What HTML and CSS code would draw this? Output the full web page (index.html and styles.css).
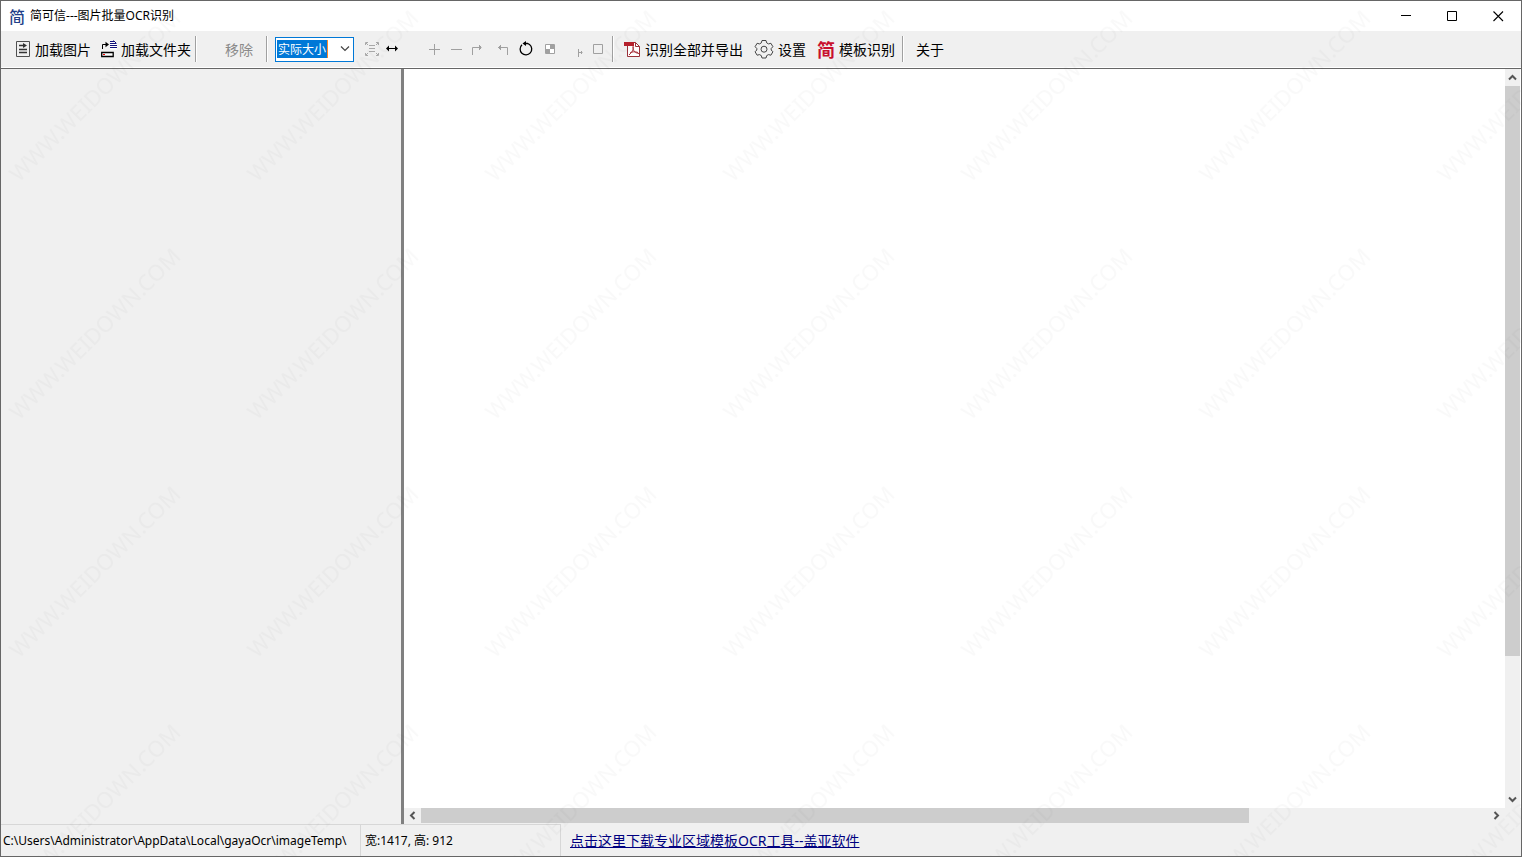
FILE: index.html
```html
<!DOCTYPE html>
<html lang="zh-CN">
<head>
<meta charset="utf-8">
<title>简可信---图片批量OCR识别</title>
<link rel="stylesheet" href="styles.css">
</head>
<body>
<div class="window">
  <header class="titlebar">
    <span class="logo logo-blue" aria-hidden="true">简</span>
    <h1 class="title">简可信---图片批量OCR识别</h1>
    <div class="caption-buttons">
      <button class="caption" aria-label="最小化"><svg width="11" height="11"><path d="M0 4.500h10" stroke="#000"/></svg></button>
      <button class="caption" aria-label="最大化"><svg width="11" height="11"><path d="M.5.5h9v9h-9z" fill="none" stroke="#000"/></svg></button>
      <button class="caption" aria-label="关闭"><svg width="11" height="11"><path d="M.5.5l9.500 9.500M10 .5L.5 10" stroke="#000" stroke-width="1.100"/></svg></button>
    </div>
  </header>

  <nav class="toolbar" aria-label="工具栏">
    <div class="group group-load">
      <button class="tool"><svg width="16" height="16" fill="none" stroke="#505050"><path d="M1.500.5h13v15h-13z"/><path d="M4 4.500h5M4 8.500h8M4 11.500h8" stroke="#333" stroke-width="1.300"/><path d="M8 2l4 2.500-4 2.500z" fill="#333" stroke="none"/></svg><span class="label">加载图片</span></button>
      <button class="tool"><svg width="16" height="18" fill="none" stroke="#000"><path d="M1.500 9V4.500h4"/><path d="M4.500 1.800L8 4.500 4.500 7.200z" fill="#000" stroke="none"/><path d="M.7 12.500h11.500v4H.7z" fill="#fff" stroke-width="1.300"/><path d="M2 14.500h2" stroke="#e00"/><path d="M9 .5h4l3 3v6H9z" fill="#fff" stroke="none"/><path d="M9 1.500h4M9 3.500h6M9 5.500h7M9 7.500h7M12.500.5l3 3" stroke="#10107a"/></svg><span class="label">加载文件夹</span></button>
    </div>
    <div class="group group-remove">
      <button class="tool" disabled><span class="label">移除</span></button>
    </div>
    <div class="group group-view">
      <div class="combo">
        <select class="combo-value" aria-label="缩放"><option>实际大小</option><option>适合宽度</option></select>
        <svg class="combo-arrow" width="10" height="6" aria-hidden="true"><path d="M1 .5l4 4 4-4" fill="none" stroke="#444" stroke-width="1.200"/></svg>
      </div>
      <div class="fit">
        <button class="icon-sm" aria-label="适合窗口" disabled><svg width="16" height="16" fill="none" stroke="#a8a8a8"><path d="M1.500 4V1.500H4M12 1.500h2.500V4M1.500 12v2.500H4M12 14.500h2.500V12M2 2l2 2M14 2l-2 2M2 14l2-2M14 14l-2-2M5 4.500h6M5 7.500h6M5 10.500h6"/></svg></button>
        <button class="icon-sm" aria-label="适合宽度"><svg width="14" height="8"><path d="M2 3.500h10" stroke="#000"/><path d="M1 3.500l3-3v6zM13 3.500l-3-3v6z"/></svg></button>
      </div>
      <div class="edit">
        <button class="icon" aria-label="放大" disabled><svg width="24" height="24"><path d="M11 12.500h11M16.500 7v11"/></svg></button>
        <button class="icon" aria-label="缩小" disabled><svg width="24" height="24"><path d="M9 12.500h11"/></svg></button>
        <button class="icon" aria-label="向右旋转" disabled><svg width="24" height="24"><path d="M6.500 18V10.500h9M13.500 8v5M14.500 9v3"/></svg></button>
        <button class="icon" aria-label="向左旋转" disabled><svg width="24" height="24"><path d="M17.500 18V10.500H8M10.500 8v5M9.500 9v3"/></svg></button>
        <button class="icon" aria-label="还原"><svg width="24" height="24"><path d="M8 7.800A5.800 5.800 0 1 0 15.500 7.500L13.500 6.500H10" class="dark"/><path d="M12 4v5L8.500 6.500z" class="arrow"/></svg></button>
        <button class="icon" aria-label="背景网格" disabled><svg width="24" height="24"><path d="M7.500 7.500h9v9h-9z" class="paper"/><path d="M12 8h4v4h-4zM8 12h4v4H8z" class="solid"/></svg></button>
        <button class="icon" aria-label="裁剪" disabled><svg width="24" height="24"><path d="M16.500 12v8M16.500 15.500h4M19.500 14v3"/></svg></button>
        <button class="icon" aria-label="选框" disabled><svg width="24" height="24"><path d="M7.500 7.500h9v9h-9z"/></svg></button>
      </div>
    </div>
    <div class="group group-ocr">
      <button class="tool"><svg width="17" height="17" fill="none"><path d="M3.500 1.500h8l4 4v10h-12z" fill="#fff" stroke="#9a3038"/><path d="M11.500 1.500v4h4" stroke="#9a3038"/><path d="M0 1h10v4H0z" fill="#b5202c"/><path d="M9 5c1 4-1 6-4 9M9 6c0 4 2 6 6 6.500M6 12c2-1.500 5-1.500 8-.5" stroke="#a52a34"/></svg><span class="label">识别全部并导出</span></button>
      <button class="tool"><svg width="20" height="20" fill="none" stroke="#444"><path d="M8 1.500h4l.7 2.400 1.800 1 2.400-.6 2 3.400-1.700 1.800v1.500l1.700 1.800-2 3.400-2.400-.6-1.800 1-.7 2.400H8l-.7-2.400-1.800-1-2.400.6-2-3.400L2.800 11V9.500L1.100 7.700l2-3.400 2.400.6 1.800-1z"/><circle cx="10" cy="10.200" r="3"/></svg><span class="label">设置</span></button>
      <button class="tool"><span class="logo logo-red" aria-hidden="true">简</span><span class="label">模板识别</span></button>
    </div>
    <div class="group group-about">
      <button class="tool"><span class="label">关于</span></button>
    </div>
  </nav>

  <main class="workspace">
    <aside class="file-list" aria-label="图片列表"></aside>
    <div class="splitter"></div>
    <section class="viewer" aria-label="图片预览">
      <div class="canvas"></div>
      <div class="scroll scroll-v">
        <button class="scroll-btn" aria-label="向上"><svg width="9" height="7"><path d="M1 5.500l3.500-3.500L8 5.500"/></svg></button>
        <div class="track"><div class="thumb"></div></div>
        <button class="scroll-btn" aria-label="向下"><svg width="9" height="7"><path d="M1 1.500L4.500 5 8 1.500"/></svg></button>
      </div>
      <div class="scroll scroll-h">
        <button class="scroll-btn" aria-label="向左"><svg width="7" height="9"><path d="M5.500 1L2 4.500 5.500 8"/></svg></button>
        <div class="track"><div class="thumb"></div></div>
        <button class="scroll-btn" aria-label="向右"><svg width="7" height="9"><path d="M1.500 1L5 4.500 1.500 8"/></svg></button>
      </div>
    </section>
  </main>

  <footer class="statusbar">
    <div class="cell cell-path">C:\Users\Administrator\AppData\Local\gayaOcr\imageTemp\</div>
    <div class="cell cell-size">宽:1417, 高: 912</div>
    <a class="promo" href="#">点击这里下载专业区域模板OCR工具--盖亚软件</a>
  </footer>

  <svg class="watermark" aria-hidden="true">
    <defs>
      <pattern id="mark" width="238" height="238" patternUnits="userSpaceOnUse" y="-48">
        <text class="mark-text" transform="translate(18 230) rotate(-45)">WWW.WEIDOWN.COM</text>
      </pattern>
    </defs>
    <rect width="100%" height="100%" fill="url(#mark)"/>
  </svg>
</div>
</body>
</html>
```
FILE: styles.css
```css
* { box-sizing: border-box; }

body {
  margin: 0;
  font-family: "Noto Sans", "Noto Sans CJK SC", sans-serif;
  color: #000;
}

button {
  margin: 0;
  padding: 0;
  border: 0;
  background: none;
  font: inherit;
  color: inherit;
}

svg { flex: none; }

.window {
  position: relative;
  display: flex;
  flex-direction: column;
  height: 100vh;
  overflow: hidden;
  border: 1px solid #666;
  background: #f0f0f0;
}

/* Title bar */
.titlebar {
  display: flex;
  align-items: center;
  height: 30px;
  flex: none;
  padding-left: 8px;
  background: #fff;
}

.title {
  flex: 1;
  margin: 0 0 0 5px;
  font-size: 12px;
  font-weight: 400;
  line-height: 18px;
}

.logo {
  font-family: "Noto Sans CJK SC", sans-serif;
  font-weight: 500;
  font-size: 16px;
  line-height: 18px;
}

.logo-blue { color: #1f3f8a; }

.logo-red {
  color: #c8102e;
  font-size: 18px;
  font-weight: 700;
}

.caption-buttons { display: flex; }

.caption {
  display: flex;
  align-items: center;
  justify-content: center;
  width: 46px;
  height: 28px;
}

/* Toolbar */
.toolbar {
  display: flex;
  align-items: center;
  height: 38px;
  flex: none;
  padding-bottom: 1px;
  border-bottom: 1px solid #666;
  box-shadow: inset 0 -1px #fff;
  font-size: 14px;
  line-height: 20px;
  white-space: nowrap;
}

.group {
  display: flex;
  align-items: center;
  height: 26px;
  border-right: 1px solid #a0a0a0;
  box-shadow: 1px 0 #fff;
}

.tool {
  display: flex;
  align-items: center;
  gap: 4px;
}

.label { padding-top: 2px; }

button:disabled { color: #8a8a8a; }

.group-load { gap: 10px; padding: 0 4px 0 14px; }
.group-remove { padding: 0 13px 0 29px; }
.group-view { padding: 0 2px 0 8px; }
.group-ocr { gap: 11px; padding: 0 7px 0 11px; }
.group-about { padding-left: 13px; border: 0; box-shadow: none; }

.combo {
  display: flex;
  align-items: center;
  justify-content: space-between;
  width: 79px;
  height: 25px;
  padding: 0 3px 0 1px;
  border: 1px solid #0078d7;
  background: #fff;
}

.combo-value {
  appearance: none;
  width: 51px;
  height: 18px;
  margin: 0;
  padding: 0 0 0 1px;
  border: 0;
  border-right: 1px solid #ff8728;
  border-radius: 0;
  background: #0078d7;
  color: #fff;
  font: 12px/18px "Noto Sans CJK SC", sans-serif;
}

.fit { display: flex; margin: 0 16px 0 8px; }

.icon-sm, .icon {
  display: flex;
  align-items: center;
  justify-content: center;
  height: 24px;
}

.icon-sm { width: 20px; }
.icon { width: 24px; }
.edit { display: flex; }
.edit path { fill: none; stroke: #a0a0a0; }
.edit .dark { stroke: #000; stroke-width: 1.3px; }
.edit .arrow { fill: #000; stroke: none; }
.edit .paper { fill: #fff; }
.edit .solid { fill: #a0a0a0; stroke: none; }

/* Workspace */
.workspace {
  display: flex;
  flex: 1;
  min-height: 0;
}

.file-list { width: 400px; flex: none; }

.splitter {
  width: 3px;
  flex: none;
  background: #808080;
  cursor: col-resize;
}

.viewer {
  flex: 1;
  display: grid;
  grid-template: 1fr 16px / 1fr 16px;
  min-width: 0;
}

.canvas { background: #fff; }

.scroll { display: flex; }
.scroll-v { flex-direction: column; border-right: 1px solid #fff; }

.scroll-btn {
  display: flex;
  align-items: center;
  justify-content: center;
  flex: none;
  width: 17px;
  height: 15px;
}

.scroll-v .scroll-btn { width: 15px; height: 17px; }
.scroll-btn path { fill: none; stroke: #555; stroke-width: 2px; }

.track { flex: 1; display: flex; }
.thumb { background: #cdcdcd; }
.scroll-v .thumb { width: 100%; height: 80.9%; }
.scroll-h .thumb { width: 77.6%; height: 15px; }

/* Status bar */
.statusbar {
  display: flex;
  height: 32px;
  flex: none;
  align-items: stretch;
}

.cell {
  flex: none;
  overflow: hidden;
  border-top: 1px solid #d7d7d7;
  border-right: 1px solid #d7d7d7;
  font-size: 12px;
  line-height: 32px;
  white-space: nowrap;
}

.cell-path { width: 360px; padding-left: 2px; }
.cell-size { width: 200px; padding-left: 4px; }

.promo {
  margin-left: 9px;
  color: #000080;
  font-size: 14px;
  line-height: 34px;
  white-space: nowrap;
}

/* Watermark lies over the whole window */
.watermark {
  position: absolute;
  inset: 0;
  width: 100%;
  height: 100%;
  pointer-events: none;
}

.mark-text {
  font-family: "Noto Sans", sans-serif;
  font-size: 22px;
  fill: #000;
  fill-opacity: 0.022;
}
```
